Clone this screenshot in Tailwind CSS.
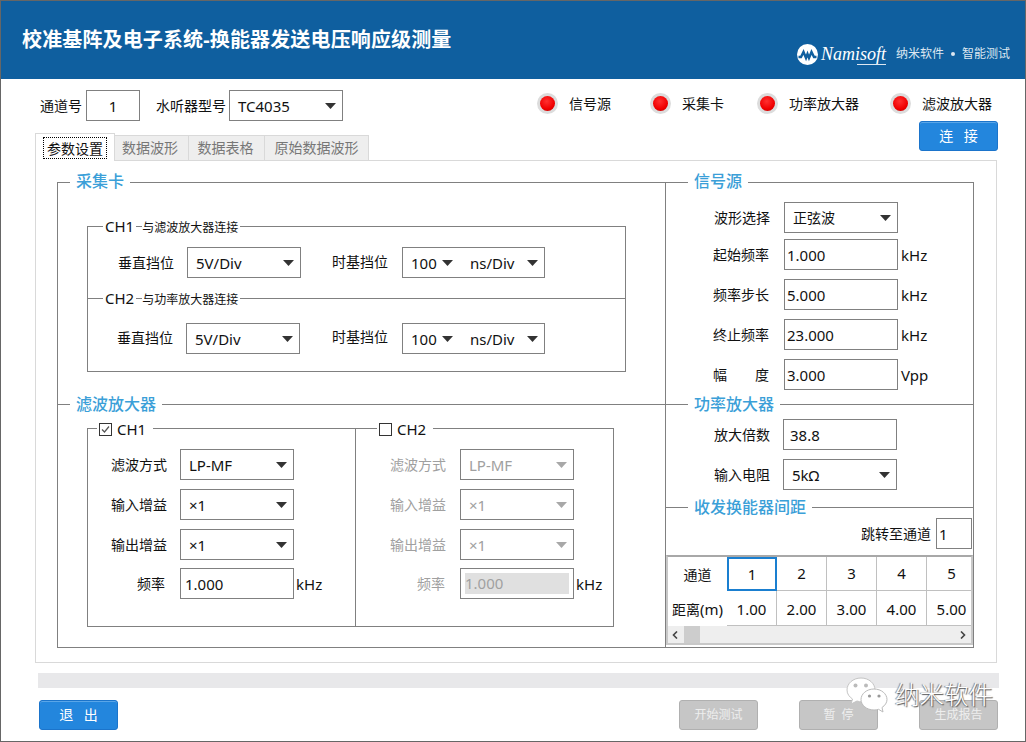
<!DOCTYPE html>
<html lang="zh">
<head>
    <meta charset="UTF-8">
    <title>校准基阵及电子系统</title>
    <script src="https://cdn.jsdelivr.net/npm/@tailwindcss/browser@4"></script>
</head>
<body class="bg-white font-['Noto_Sans','Noto_Sans_CJK_SC',sans-serif] text-[14px] leading-[20px] text-[#111]">
<div class="relative w-[1026px] h-[742px] overflow-hidden border border-[#666] bg-white">

    <!-- title bar -->
    <header class="flex justify-between h-[78px] bg-[#0f5f9f] text-white">
        <h1 class="pl-[21px] pt-[24px] text-[20px] leading-[30px] font-bold tracking-[0.14px]">校准基阵及电子系统-换能器发送电压响应级测量</h1>
        <div class="flex items-center h-[24px] mt-[41px] pr-[15px] text-[12px] text-[#dde7f1]">
            <svg class="w-[21px] h-[21px]" viewBox="0 0 21 21">
                <circle cx="10.5" cy="10.5" r="10.5" fill="#fff"/>
                <path d="M1.5 13 L4 13 L6.5 8 L9 14 L10.5 10 L12 14 L14.5 8 L17 13 L19.5 13" fill="none" stroke="#0f5f9f" stroke-width="2.4"/>
            </svg>
            <span class="ml-[3px] mr-[10px] font-['Liberation_Serif',serif] italic text-[18px] text-white relative">Namisoft<span class="absolute right-0 bottom-[-1px] w-[29px] h-px bg-[#dde7f1]"></span></span>
            <span>纳米软件</span>
            <span class="w-[4px] h-[4px] rounded-full bg-[#dde7f1] mx-[7px]"></span>
            <span>智能测试</span>
        </div>
    </header>

    <!-- top controls -->
    <div class="flex items-start h-[54px] pt-[11px] pl-[39px]">
        <div class="flex items-center h-[31px]">
            <span>通道号</span>
            <div class="flex items-center justify-center w-[54px] h-[31px] ml-[4px] border border-[#808080] text-[15px]">1</div>
            <span class="ml-[16px]">水听器型号</span>
            <div class="flex items-center justify-between w-[114px] h-[31px] ml-[3px] pl-[8px] pr-[6px] border border-[#808080] text-[15px]">TC4035
                <svg class="w-[11px] h-[6px]" viewBox="0 0 11 6"><polygon points="0,0 11,0 5.5,6" fill="#333"/></svg>
            </div>
        </div>
        <div class="flex ml-[194px] mt-[3px]">
            <div class="flex items-center w-[113px]">
                <span class="flex items-center justify-center w-[21px] h-[21px] rounded-full bg-[#dcdcdc]"><span class="w-[15px] h-[15px] rounded-full bg-[radial-gradient(circle_at_45%_35%,#ff3030,#f00000_60%,#b00000)]"></span></span>
                <span class="ml-[11px]">信号源</span>
            </div>
            <div class="flex items-center w-[107px]">
                <span class="flex items-center justify-center w-[21px] h-[21px] rounded-full bg-[#dcdcdc]"><span class="w-[15px] h-[15px] rounded-full bg-[radial-gradient(circle_at_45%_35%,#ff3030,#f00000_60%,#b00000)]"></span></span>
                <span class="ml-[11px]">采集卡</span>
            </div>
            <div class="flex items-center w-[133px]">
                <span class="flex items-center justify-center w-[21px] h-[21px] rounded-full bg-[#dcdcdc]"><span class="w-[15px] h-[15px] rounded-full bg-[radial-gradient(circle_at_45%_35%,#ff3030,#f00000_60%,#b00000)]"></span></span>
                <span class="ml-[11px]">功率放大器</span>
            </div>
            <div class="flex items-center">
                <span class="flex items-center justify-center w-[21px] h-[21px] rounded-full bg-[#dcdcdc]"><span class="w-[15px] h-[15px] rounded-full bg-[radial-gradient(circle_at_45%_35%,#ff3030,#f00000_60%,#b00000)]"></span></span>
                <span class="ml-[11px]">滤波放大器</span>
            </div>
        </div>
    </div>

    <div class="pl-[34px] pr-[27px]">
        <!-- tabs -->
        <div class="flex items-end h-[27px]">
            <div class="relative z-10 flex items-center justify-center w-[80px] h-[28px] -mb-px border border-b-0 border-[#d9d9d9] bg-white">
                <span class="px-[3px] h-[22px] leading-[21px] border border-dotted border-black">参数设置</span>
            </div>
            <div class="flex items-center justify-center w-[74px] h-[25px] pr-[3px] border-t border-r border-[#d9d9d9] bg-[#eeeeee] text-[#777]">数据波形</div>
            <div class="flex items-center justify-center w-[76px] h-[25px] pr-[2px] border-t border-r border-[#d9d9d9] bg-[#eeeeee] text-[#777]">数据表格</div>
            <div class="flex items-center justify-center w-[104px] h-[25px] border-t border-r border-[#d9d9d9] bg-[#eeeeee] text-[#777]">原始数据波形</div>
            <button class="self-start ml-auto -mt-[12px] w-[79px] h-[30px] rounded-[3px] border border-[#1b74cb] bg-[#2386dd] shadow-[inset_0_1px_0_#5aa6e8] text-white [word-spacing:7px]">连 接</button>
        </div>

        <!-- settings panel -->
        <div class="w-[962px] h-[503px] pl-[21px] pt-[21px] border border-[#d9d9d9]">
            <div class="grid grid-cols-[608px_1fr] w-[917px] h-[466px] border border-[#808080]">

                <!-- left column -->
                <div class="border-r border-[#808080]">
                    <section class="relative h-[221px] pt-[43px] pl-[29px]">
                        <span class="absolute -top-[14px] left-[12px] px-[6px] bg-white text-[16px] leading-[24px] font-medium text-[#3b9fd8]">采集卡</span>
                        <div class="relative w-[539px] h-[146px] border border-[#808080]">
                            <span class="absolute -top-[11px] left-[15px] flex items-baseline gap-[6px]"><span class="px-[2px] bg-white text-[15px]">CH1</span><span class="pr-[2px] bg-white text-[12px]">与滤波放大器连接</span></span>
                            <div class="flex items-start h-[72px] pl-[30px] pt-[20px] border-b border-[#808080]">
                                <span class="leading-[31px]">垂直挡位</span>
                                <div class="flex items-center justify-between w-[114px] h-[31px] ml-[13px] pl-[8px] pr-[6px] border border-[#808080] text-[15px]">5V/Div
                                    <svg class="w-[11px] h-[6px]" viewBox="0 0 11 6"><polygon points="0,0 11,0 5.5,6" fill="#333"/></svg>
                                </div>
                                <span class="ml-[31px] leading-[30px]">时基挡位</span>
                                <div class="flex items-center w-[143px] h-[31px] ml-[14px] pl-[8px] pr-[6px] border border-[#808080] text-[15px]">
                                    <span class="w-[31px]">100</span>
                                    <svg class="w-[11px] h-[6px]" viewBox="0 0 11 6"><polygon points="0,0 11,0 5.5,6" fill="#333"/></svg>
                                    <span class="ml-[17px] mr-auto">ns/Div</span>
                                    <svg class="w-[11px] h-[6px]" viewBox="0 0 11 6"><polygon points="0,0 11,0 5.5,6" fill="#333"/></svg>
                                </div>
                            </div>
                            <span class="absolute top-[61px] left-[15px] flex items-baseline gap-[6px]"><span class="px-[2px] bg-white text-[15px]">CH2</span><span class="pr-[2px] bg-white text-[12px]">与功率放大器连接</span></span>
                            <div class="flex items-start pl-[29px] pt-[24px]">
                                <span class="leading-[30px]">垂直挡位</span>
                                <div class="flex items-center justify-between w-[114px] h-[31px] ml-[13px] pl-[8px] pr-[6px] border border-[#808080] text-[15px]">5V/Div
                                    <svg class="w-[11px] h-[6px]" viewBox="0 0 11 6"><polygon points="0,0 11,0 5.5,6" fill="#333"/></svg>
                                </div>
                                <span class="ml-[32px] leading-[28px]">时基挡位</span>
                                <div class="flex items-center w-[143px] h-[31px] ml-[14px] pl-[8px] pr-[6px] border border-[#808080] text-[15px]">
                                    <span class="w-[31px]">100</span>
                                    <svg class="w-[11px] h-[6px]" viewBox="0 0 11 6"><polygon points="0,0 11,0 5.5,6" fill="#333"/></svg>
                                    <span class="ml-[17px] mr-auto">ns/Div</span>
                                    <svg class="w-[11px] h-[6px]" viewBox="0 0 11 6"><polygon points="0,0 11,0 5.5,6" fill="#333"/></svg>
                                </div>
                            </div>
                        </div>
                    </section>

                    <section class="relative h-[244px] pt-[23px] pl-[29px] border-t border-[#808080]">
                        <span class="absolute -top-[13px] left-[12px] px-[6px] bg-white text-[16px] leading-[24px] font-medium text-[#3b9fd8]">滤波放大器</span>
                        <div class="grid grid-cols-[268px_1fr] w-[527px] h-[199px] border border-[#808080]">
                            <!-- CH1 -->
                            <div class="relative flex flex-col pl-[23px] pt-[20px] border-r border-[#808080]">
                                <label class="absolute -top-[10px] left-[9px] flex items-center h-[20px] px-[2px] pr-[7px] bg-white text-[15px]">
                                    <svg class="w-[13px] h-[13px] mr-[5px]" viewBox="0 0 13 13"><rect x=".5" y=".5" width="12" height="12" fill="#fff" stroke="#333"/><path d="M3 6.5 L5.5 9 L10 3.5" fill="none" stroke="#555" stroke-width="1.2"/></svg>CH1</label>
                                <div class="flex items-center h-[31px]">
                                    <span class="w-[56px]">滤波方式</span>
                                    <div class="flex items-center justify-between w-[114px] h-[31px] ml-[13px] pl-[8px] pr-[6px] border border-[#808080] text-[15px]">LP-MF
                                        <svg class="w-[11px] h-[6px]" viewBox="0 0 11 6"><polygon points="0,0 11,0 5.5,6" fill="#333"/></svg>
                                    </div>
                                </div>
                                <div class="flex items-center h-[31px] mt-[9px]">
                                    <span class="w-[56px]">输入增益</span>
                                    <div class="flex items-center justify-between w-[114px] h-[31px] ml-[13px] pl-[8px] pr-[6px] border border-[#808080] text-[15px]">×1
                                        <svg class="w-[11px] h-[6px]" viewBox="0 0 11 6"><polygon points="0,0 11,0 5.5,6" fill="#333"/></svg>
                                    </div>
                                </div>
                                <div class="flex items-center h-[31px] mt-[9px]">
                                    <span class="w-[56px]">输出增益</span>
                                    <div class="flex items-center justify-between w-[114px] h-[31px] ml-[13px] pl-[8px] pr-[6px] border border-[#808080] text-[15px]">×1
                                        <svg class="w-[11px] h-[6px]" viewBox="0 0 11 6"><polygon points="0,0 11,0 5.5,6" fill="#333"/></svg>
                                    </div>
                                </div>
                                <div class="flex items-center h-[31px] mt-[8px]">
                                    <span class="w-[54px] mr-[2px] text-right">频率</span>
                                    <div class="flex items-center w-[114px] h-[31px] ml-[13px] pl-[4px] border border-[#808080] text-[15px]">1.000</div>
                                    <span class="ml-[2px] text-[15px]">kHz</span>
                                </div>
                            </div>
                            <!-- CH2 -->
                            <div class="relative flex flex-col pl-[34px] pt-[20px]">
                                <label class="absolute -top-[10px] left-[21px] flex items-center h-[20px] px-[2px] pr-[7px] bg-white text-[15px]">
                                    <svg class="w-[13px] h-[13px] mr-[5px]" viewBox="0 0 13 13"><rect x=".5" y=".5" width="12" height="12" fill="#fff" stroke="#333"/></svg>CH2</label>
                                <div class="flex items-center h-[31px]">
                                    <span class="w-[56px] text-[#a0a0a0]">滤波方式</span>
                                    <div class="flex items-center justify-between w-[114px] h-[31px] ml-[14px] pl-[8px] pr-[6px] border border-[#808080] text-[15px] text-[#a0a0a0]">LP-MF
                                        <svg class="w-[11px] h-[6px]" viewBox="0 0 11 6"><polygon points="0,0 11,0 5.5,6" fill="#a8a8a8"/></svg>
                                    </div>
                                </div>
                                <div class="flex items-center h-[31px] mt-[9px]">
                                    <span class="w-[56px] text-[#a0a0a0]">输入增益</span>
                                    <div class="flex items-center justify-between w-[114px] h-[31px] ml-[14px] pl-[8px] pr-[6px] border border-[#808080] text-[15px] text-[#a0a0a0]">×1
                                        <svg class="w-[11px] h-[6px]" viewBox="0 0 11 6"><polygon points="0,0 11,0 5.5,6" fill="#a8a8a8"/></svg>
                                    </div>
                                </div>
                                <div class="flex items-center h-[31px] mt-[9px]">
                                    <span class="w-[56px] text-[#a0a0a0]">输出增益</span>
                                    <div class="flex items-center justify-between w-[114px] h-[31px] ml-[14px] pl-[8px] pr-[6px] border border-[#808080] text-[15px] text-[#a0a0a0]">×1
                                        <svg class="w-[11px] h-[6px]" viewBox="0 0 11 6"><polygon points="0,0 11,0 5.5,6" fill="#a8a8a8"/></svg>
                                    </div>
                                </div>
                                <div class="flex items-center h-[31px] mt-[8px]">
                                    <span class="w-[55px] mr-[1px] text-right text-[#a0a0a0]">频率</span>
                                    <div class="flex items-center w-[114px] h-[31px] ml-[14px] p-[4px] border border-[#808080] text-[15px] text-[#a0a0a0]"><span class="w-full h-[21px] leading-[21px] bg-[#e0e0e0]">1.000</span></div>
                                    <span class="ml-[2px] text-[15px]">kHz</span>
                                </div>
                            </div>
                        </div>
                    </section>
                </div>

                <!-- right column -->
                <div>
                    <section class="relative h-[221px] pt-[19px] pl-[48px]">
                        <span class="absolute -top-[14px] left-[22px] px-[6px] bg-white text-[16px] leading-[24px] font-medium text-[#3b9fd8]">信号源</span>
                        <div class="flex items-center h-[31px]">
                            <span class="w-[56px]">波形选择</span>
                            <div class="flex items-center justify-between w-[114px] h-[31px] ml-[14px] pl-[8px] pr-[6px] border border-[#808080]">正弦波
                                <svg class="w-[11px] h-[6px]" viewBox="0 0 11 6"><polygon points="0,0 11,0 5.5,6" fill="#333"/></svg>
                            </div>
                        </div>
                        <div class="flex items-center h-[31px] mt-[6px] -ml-px">
                            <span class="w-[56px]">起始频率</span>
                            <div class="flex items-center w-[114px] h-[31px] ml-[15px] pl-[2px] border border-[#808080] text-[15px]">1.000</div>
                            <span class="ml-[3px] text-[15px]">kHz</span>
                        </div>
                        <div class="flex items-center h-[31px] mt-[9px] -ml-px">
                            <span class="w-[56px]">频率步长</span>
                            <div class="flex items-center w-[114px] h-[31px] ml-[15px] pl-[2px] border border-[#808080] text-[15px]">5.000</div>
                            <span class="ml-[3px] text-[15px]">kHz</span>
                        </div>
                        <div class="flex items-center h-[31px] mt-[9px] -ml-px">
                            <span class="w-[56px]">终止频率</span>
                            <div class="flex items-center w-[114px] h-[31px] ml-[15px] pl-[2px] border border-[#808080] text-[15px]">23.000</div>
                            <span class="ml-[3px] text-[15px]">kHz</span>
                        </div>
                        <div class="flex items-center h-[31px] mt-[9px] -ml-px">
                            <span class="flex justify-between w-[56px]"><span>幅</span><span>度</span></span>
                            <div class="flex items-center w-[114px] h-[31px] ml-[15px] pl-[2px] border border-[#808080] text-[15px]">3.000</div>
                            <span class="ml-[3px] text-[15px]">Vpp</span>
                        </div>
                    </section>

                    <section class="relative h-[103px] pt-[14px] pl-[48px] border-t border-[#808080]">
                        <span class="absolute -top-[13px] left-[22px] px-[6px] bg-white text-[16px] leading-[24px] font-medium text-[#3b9fd8]">功率放大器</span>
                        <div class="flex items-center h-[31px]">
                            <span class="w-[56px]">放大倍数</span>
                            <div class="flex items-center w-[114px] h-[31px] ml-[13px] pl-[6px] border border-[#808080] text-[15px]">38.8</div>
                        </div>
                        <div class="flex items-center h-[31px] mt-[9px]">
                            <span class="w-[56px]">输入电阻</span>
                            <div class="flex items-center justify-between w-[114px] h-[31px] ml-[13px] pl-[8px] pr-[6px] border border-[#808080] text-[15px]">5kΩ
                                <svg class="w-[11px] h-[6px]" viewBox="0 0 11 6"><polygon points="0,0 11,0 5.5,6" fill="#333"/></svg>
                            </div>
                        </div>
                    </section>

                    <section class="relative h-[140px] pt-[10px] border-t border-[#808080]">
                        <span class="absolute -top-[13px] left-[22px] px-[6px] bg-white text-[16px] leading-[24px] font-medium text-[#3b9fd8]">收发换能器间距</span>
                        <div class="flex items-center justify-end h-[31px] pr-px">
                            <span>跳转至通道</span>
                            <div class="flex items-center w-[36px] h-[31px] ml-[5px] pl-[2px] border border-[#808080] text-[15px]">1</div>
                        </div>
                        <!-- channel distance table -->
                        <div class="mt-[6px] w-[307px] h-[90px] border-2 border-t-[#a8a8a8] border-[#c8c8c8] overflow-hidden text-[15px]">
                            <div class="grid grid-cols-[59px_repeat(5,50px)] grid-rows-[34px_35px] w-[309px] h-[69px] text-center leading-[33px]">
                                <div class="text-[14px] leading-[35px]">通道</div>
                                <div class="border-2 border-[#1a7fd0] leading-[30px]">1</div>
                                <div class="border-r border-b border-[#c0c0c0]">2</div>
                                <div class="border-r border-b border-[#c0c0c0]">3</div>
                                <div class="border-r border-b border-[#c0c0c0]">4</div>
                                <div class="border-r border-b border-[#c0c0c0]">5</div>
                                <div class="leading-[36px] whitespace-nowrap"><span class="text-[14px]">距离</span>(m)</div>
                                <div class="border-r border-b border-[#c0c0c0] leading-[36px]">1.00</div>
                                <div class="border-r border-b border-[#c0c0c0] leading-[36px]">2.00</div>
                                <div class="border-r border-b border-[#c0c0c0] leading-[36px]">3.00</div>
                                <div class="border-r border-b border-[#c0c0c0] leading-[36px]">4.00</div>
                                <div class="border-r border-b border-[#c0c0c0] leading-[36px]">5.00</div>
                            </div>
                            <div class="flex items-center h-[17px] bg-[#eeeeee]">
                                <svg class="w-[6px] h-[8px] ml-[4px]" viewBox="0 0 6 8"><path d="M5 .5 L1.5 4 L5 7.5" fill="none" stroke="#444" stroke-width="1.6"/></svg>
                                <div class="w-[16px] h-[17px] ml-[6px] bg-[#cdcdcd]"></div>
                                <svg class="w-[6px] h-[8px] ml-auto mr-[5px]" viewBox="0 0 6 8"><path d="M1 .5 L4.5 4 L1 7.5" fill="none" stroke="#444" stroke-width="1.6"/></svg>
                            </div>
                        </div>
                    </section>
                </div>
            </div>
        </div>

        <!-- progress -->
        <div class="w-[961px] h-[15px] ml-[3px] mt-[10px] bg-[#e8e8ea]"></div>

        <!-- bottom buttons -->
        <div class="flex mt-[12px] ml-[4px]">
            <button class="w-[79px] h-[30px] rounded-[3px] border border-[#1b74cb] bg-[#2386dd] shadow-[inset_0_1px_0_#5aa6e8] text-white [word-spacing:7px]">退 出</button>
            <div class="flex gap-[41px] ml-auto">
                <button class="w-[79px] h-[30px] rounded-[3px] border border-[#b0b0b0] bg-[#c6c6c6] text-[12px] text-[#eeeeee]">开始测试</button>
                <button class="w-[79px] h-[30px] rounded-[3px] border border-[#b0b0b0] bg-[#c6c6c6] text-[12px] text-[#eeeeee] [word-spacing:3px]">暂 停</button>
                <button class="w-[79px] h-[30px] rounded-[3px] border border-[#b0b0b0] bg-[#c6c6c6] text-[12px] text-[#eeeeee]">生成报告</button>
            </div>
        </div>
    </div>

    <!-- watermark -->
    <div class="absolute left-[845px] top-[675px] flex items-center">
        <svg class="w-[42px] h-[38px]" viewBox="0 0 42 38">
            <path d="M15 2 C7 2 1 7.500 1 14 C1 18 3.500 21 6.500 23 L5 28 L11 25 C13 25.700 14 25.800 16 25.800 C25 25.800 29 20 29 14 C29 7.500 23 2 15 2 Z" fill="#fff" stroke="#c4c4c4"/>
            <path d="M28 13 C20.500 13 15 18 15 23.500 C15 29 20.500 34 28 34 C30 34 31 33.800 32.500 33.300 L37 36 L36 31.500 C39 29.500 41 26.700 41 23.500 C41 18 35.500 13 28 13 Z" fill="#fff" stroke="#bbb"/>
            <circle cx="9.500" cy="9.500" r="2" fill="#bbb"/><circle cx="20" cy="9.500" r="2" fill="#bbb"/>
            <circle cx="23.500" cy="20" r="1.600" fill="#999"/><circle cx="33" cy="20" r="1.600" fill="#999"/>
        </svg>
        <span class="ml-[7px] text-[24.5px] leading-[30px] font-light text-white [text-shadow:1px_1px_1px_#555,-1px_0_1px_#777]">纳米软件</span>
    </div>
</div>
</body>
</html>
